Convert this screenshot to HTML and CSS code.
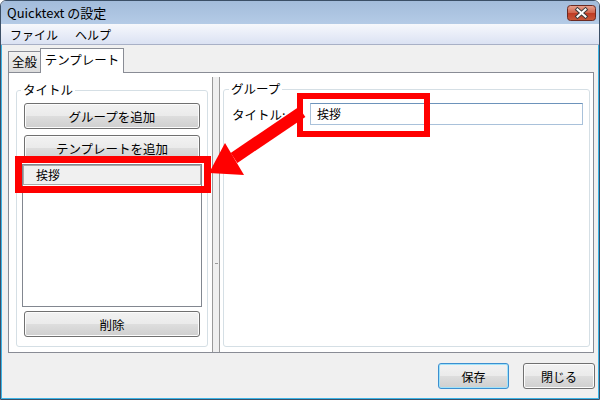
FILE: index.html
```html
<!DOCTYPE html>
<html lang="ja">
<head>
    <meta charset="UTF-8">
    <title>Quicktext の設定</title>
    <link rel="stylesheet" href="styles.css">
</head>
<body>
    <div class="window">
        <div class="titlebar">
            <span class="title">Quicktext の設定</span>
            <svg class="close-btn" width="29" height="16" viewBox="0 0 29 16">
                <defs>
                    <linearGradient id="closeGrad" x1="0" y1="0" x2="0" y2="1">
                        <stop offset="0" stop-color="#e8a493"/>
                        <stop offset="0.5" stop-color="#d0634a"/>
                        <stop offset="0.5" stop-color="#bf3a22"/>
                        <stop offset="1" stop-color="#c95a3c"/>
                    </linearGradient>
                </defs>
                <rect x="0.5" y="0.5" width="28" height="15" rx="3" fill="url(#closeGrad)" stroke="#6b2a22"/>
                <path d="M10.5 4.5 L18.5 11.5 M18.5 4.5 L10.5 11.5" stroke="#3c3c3c" stroke-width="4" stroke-linecap="square"/>
                <path d="M10.5 4.5 L18.5 11.5 M18.5 4.5 L10.5 11.5" stroke="#ffffff" stroke-width="2" stroke-linecap="square"/>
            </svg>
        </div>
        <div class="menubar">
            <span class="menu-item">ファイル</span>
            <span class="menu-item">ヘルプ</span>
        </div>
        <div class="client">
            <div class="tabs">
                <div class="tab">全般</div>
                <div class="tab active">テンプレート</div>
            </div>
            <div class="tab-panel">
                <div class="pane left-pane">
                    <div class="group">
                        <span class="group-label">タイトル</span>
                        <div class="btn side-btn">グループを追加</div>
                        <div class="btn side-btn">テンプレートを追加</div>
                        <div class="listbox">
                            <div class="list-item">挨拶</div>
                        </div>
                        <div class="btn side-btn delete-btn">削除</div>
                    </div>
                </div>
                <div class="splitter"><span class="grip"></span></div>
                <div class="pane right-pane">
                    <div class="group">
                        <span class="group-label">グループ</span>
                        <div class="field-row">
                            <span class="field-label">タイトル:</span>
                            <div class="textbox">挨拶</div>
                        </div>
                    </div>
                </div>
            </div>
            <div class="footer">
                <div class="btn footer-btn primary">保存</div>
                <div class="btn footer-btn">閉じる</div>
            </div>
        </div>

        <!-- annotation overlays -->
        <div class="mark mark-item"></div>
        <div class="mark mark-input"></div>
        <svg class="arrow" width="600" height="400" viewBox="0 0 600 400">
            <line x1="302" y1="112" x2="234" y2="158" stroke="#ff0000" stroke-width="12"/>
            <polygon points="209,173 225,143 244,175" fill="#ff0000"/>
        </svg>
    </div>
</body>
</html>
```

FILE: styles.css
```css
* {
    margin: 0;
    padding: 0;
    box-sizing: border-box;
}

body {
    font-family: "Noto Sans CJK JP", "Liberation Sans", sans-serif;
    font-size: 12px;
    color: #000;
    background: #fff;
}

.window {
    position: relative;
    width: 600px;
    height: 400px;
    border: 1px solid #3b4f66;
    border-radius: 6px 6px 0 0;
    background: #f0f0f0;
    display: flex;
    flex-direction: column;
    overflow: hidden;
}

.titlebar {
    height: 23px;
    display: flex;
    align-items: flex-start;
    justify-content: space-between;
    background: linear-gradient(#a3bcdb, #b4cbe6);
}

.title {
    font-size: 13px;
    line-height: 23px;
    padding-left: 6px;
}

.close-btn {
    margin-top: 4px;
    margin-right: 3px;
}

.menubar {
    height: 21px;
    display: flex;
    gap: 17px;
    padding-left: 9px;
    align-items: center;
    background: linear-gradient(#f6f8fc 0, #eaeef8 45%, #dbe2f3 100%);
    border-bottom: 1px solid #a8b0c6;
}

.client {
    flex: 1;
    display: flex;
    flex-direction: column;
    padding: 3px 4px 0 6px;
    border-left: 1px solid #3db4e6;
    border-right: 1px solid #3db4e6;
    border-bottom: 1px solid #3db4e6;
}

.tabs {
    display: flex;
    align-items: flex-end;
    height: 24px;
    position: relative;
    z-index: 1;
}

.tab {
    width: 33px;
    height: 21px;
    text-align: center;
    line-height: 20px;
    font-size: 12.5px;
    border: 1px solid #898c95;
    border-bottom: none;
    background: linear-gradient(#f2f2f2, #dcdcdc);
}

.tab.active {
    width: 84px;
    height: 25px;
    margin-bottom: -1px;
    margin-left: -1px;
    line-height: 22px;
    background: #fff;
}

.tab-panel {
    height: 281px;
    display: flex;
    border: 1px solid #898c95;
    background: #fff;
    padding-top: 4px;
}

.pane {
    display: flex;
    flex-direction: column;
}

.left-pane {
    width: 203px;
    padding: 13px 4px 5px 7px;
}

.right-pane {
    flex: 1;
    padding: 12px 3px 5px 3px;
}

.splitter {
    width: 8px;
    position: relative;
    background: #f0f0f0;
    border-left: 1px solid #9a9a9a;
    border-right: 1px solid #9a9a9a;
}

.grip {
    position: absolute;
    left: 2px;
    top: 186px;
    width: 3px;
    height: 1px;
    background: #9a9a9a;
}

.group {
    flex: 1;
    display: flex;
    flex-direction: column;
    border: 1px solid #d5dfe5;
    border-radius: 3px;
    padding-bottom: 6px;
}

.group-label {
    align-self: flex-start;
    margin: -9px 0 0 4px;
    padding: 0 2px;
    line-height: 16px;
    font-size: 12.5px;
    background: #fff;
}

.right-pane .group-label {
    margin-left: 5px;
}

.btn {
    display: flex;
    align-items: center;
    justify-content: center;
    border: 1px solid #707070;
    border-radius: 3px;
    background: linear-gradient(#f2f2f2 0, #ebebeb 48%, #dddddd 52%, #cfcfcf 100%);
    box-shadow: inset 0 0 0 1px #fcfcfc;
}

.side-btn {
    height: 26px;
    margin: 6px 7px 0 7px;
    font-size: 12.5px;
}

.side-btn:first-of-type {
    margin-top: 5px;
}

.listbox {
    height: 143px;
    margin: 3px 5px 0 5px;
    border: 1px solid #828790;
    background: #fff;
}

.list-item {
    height: 20px;
    line-height: 18px;
    padding-left: 12px;
    border: 1px solid #a8a8a8;
    background: #f0f0f0;
}

.delete-btn {
    margin-top: 4px;
}

.field-row {
    display: flex;
    align-items: center;
    margin-top: 6px;
    padding-left: 8px;
}

.field-label {
    width: 78px;
    font-size: 12.5px;
}

.textbox {
    width: 273px;
    height: 22px;
    line-height: 20px;
    padding-left: 6px;
    border: 1px solid #a9c1da;
    border-top-color: #6d93bb;
    background: #fff;
}

.footer {
    display: flex;
    justify-content: flex-end;
    gap: 14px;
    padding-top: 10px;
    margin-right: -1px;
}

.footer-btn {
    width: 72px;
    height: 26px;
}

.footer-btn.primary {
    width: 71px;
    border-color: #3c8fd0;
    box-shadow: inset 0 0 0 1px #9fe2fa;
}

/* red annotation marks */
.mark {
    position: absolute;
    border: 7px solid #ff0000;
}

.mark-item {
    left: 14px;
    top: 155px;
    width: 196px;
    height: 37px;
}

.mark-input {
    left: 296px;
    top: 92px;
    width: 133px;
    height: 44px;
    border-width: 6px;
}

.arrow {
    position: absolute;
    left: -1px;
    top: -1px;
}
```
